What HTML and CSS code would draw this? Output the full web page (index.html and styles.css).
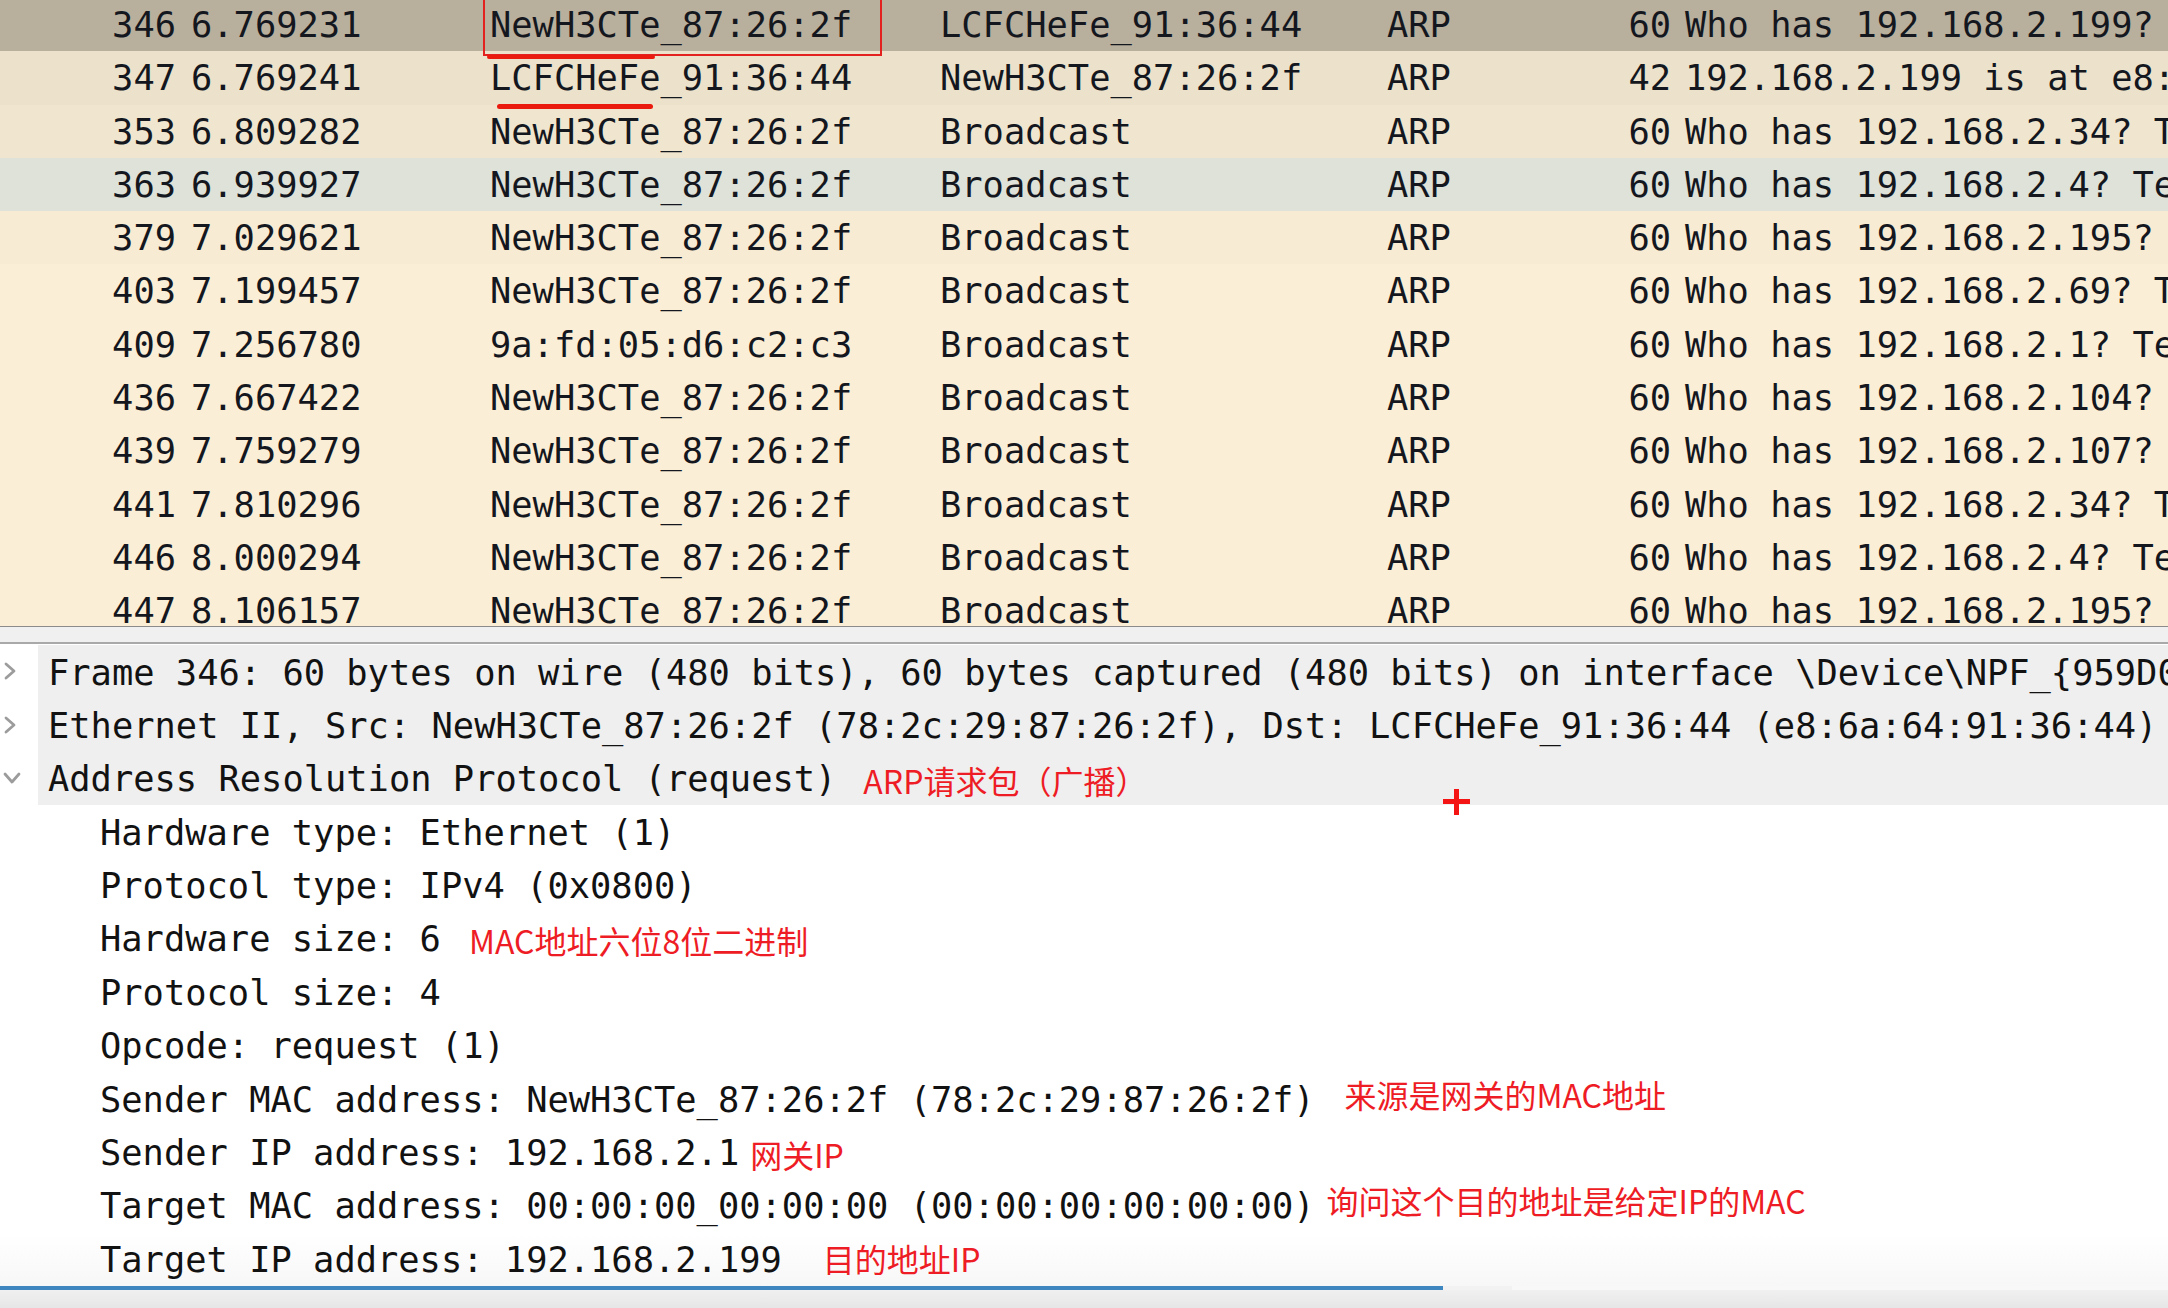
FILE: index.html
```html
<!DOCTYPE html>
<html lang="zh-CN">
<head>
<meta charset="utf-8">
<title>Wireshark ARP</title>
<link rel="stylesheet" href="styles.css">
</head>
<body>
<div class="packet-list">
  <div class="pkt pkt--sel"><span class="c-no">346</span><span class="c-time">6.769231</span><span>NewH3CTe_87:26:2f</span><span>LCFCHeFe_91:36:44</span><span>ARP</span><span class="c-len">60</span><span class="c-info">Who has 192.168.2.199? Tell 192.168.2.1</span></div>
  <div class="pkt pkt--shade1"><span class="c-no">347</span><span class="c-time">6.769241</span><span>LCFCHeFe_91:36:44</span><span>NewH3CTe_87:26:2f</span><span>ARP</span><span class="c-len">42</span><span class="c-info">192.168.2.199 is at e8:6a:64:91:36:44</span></div>
  <div class="pkt pkt--shade2"><span class="c-no">353</span><span class="c-time">6.809282</span><span>NewH3CTe_87:26:2f</span><span>Broadcast</span><span>ARP</span><span class="c-len">60</span><span class="c-info">Who has 192.168.2.34? Tell 192.168.2.1</span></div>
  <div class="pkt pkt--alt"><span class="c-no">363</span><span class="c-time">6.939927</span><span>NewH3CTe_87:26:2f</span><span>Broadcast</span><span>ARP</span><span class="c-len">60</span><span class="c-info">Who has 192.168.2.4? Tell 192.168.2.1</span></div>
  <div class="pkt pkt--shade3"><span class="c-no">379</span><span class="c-time">7.029621</span><span>NewH3CTe_87:26:2f</span><span>Broadcast</span><span>ARP</span><span class="c-len">60</span><span class="c-info">Who has 192.168.2.195? Tell 192.168.2.1</span></div>
  <div class="pkt"><span class="c-no">403</span><span class="c-time">7.199457</span><span>NewH3CTe_87:26:2f</span><span>Broadcast</span><span>ARP</span><span class="c-len">60</span><span class="c-info">Who has 192.168.2.69? Tell 192.168.2.1</span></div>
  <div class="pkt"><span class="c-no">409</span><span class="c-time">7.256780</span><span>9a:fd:05:d6:c2:c3</span><span>Broadcast</span><span>ARP</span><span class="c-len">60</span><span class="c-info">Who has 192.168.2.1? Tell 192.168.2.105</span></div>
  <div class="pkt"><span class="c-no">436</span><span class="c-time">7.667422</span><span>NewH3CTe_87:26:2f</span><span>Broadcast</span><span>ARP</span><span class="c-len">60</span><span class="c-info">Who has 192.168.2.104? Tell 192.168.2.1</span></div>
  <div class="pkt"><span class="c-no">439</span><span class="c-time">7.759279</span><span>NewH3CTe_87:26:2f</span><span>Broadcast</span><span>ARP</span><span class="c-len">60</span><span class="c-info">Who has 192.168.2.107? Tell 192.168.2.1</span></div>
  <div class="pkt"><span class="c-no">441</span><span class="c-time">7.810296</span><span>NewH3CTe_87:26:2f</span><span>Broadcast</span><span>ARP</span><span class="c-len">60</span><span class="c-info">Who has 192.168.2.34? Tell 192.168.2.1</span></div>
  <div class="pkt"><span class="c-no">446</span><span class="c-time">8.000294</span><span>NewH3CTe_87:26:2f</span><span>Broadcast</span><span>ARP</span><span class="c-len">60</span><span class="c-info">Who has 192.168.2.4? Tell 192.168.2.1</span></div>
  <div class="pkt"><span class="c-no">447</span><span class="c-time">8.106157</span><span>NewH3CTe_87:26:2f</span><span>Broadcast</span><span>ARP</span><span class="c-len">60</span><span class="c-info">Who has 192.168.2.195? Tell 192.168.2.1</span></div>
</div>

<div class="splitter"></div>

<div class="details">
  <div class="node node--hl">
    <span class="twisty"><svg class="chev-r" viewBox="0 0 14 20"><polyline points="3,3 11,10 3,17"/></svg></span>
    <span class="label">Frame 346: 60 bytes on wire (480 bits), 60 bytes captured (480 bits) on interface \Device\NPF_{959D0C2A-7B1E-4F3A-9D61-2E8C5B7A1F04}, id 0</span>
  </div>
  <div class="node node--hl">
    <span class="twisty"><svg class="chev-r" viewBox="0 0 14 20"><polyline points="3,3 11,10 3,17"/></svg></span>
    <span class="label">Ethernet II, Src: NewH3CTe_87:26:2f (78:2c:29:87:26:2f), Dst: LCFCHeFe_91:36:44 (e8:6a:64:91:36:44)</span>
  </div>
  <div class="node node--hl">
    <span class="twisty"><svg class="chev-d" viewBox="0 0 18 12"><polyline points="2,2 9,10 16,2"/></svg></span>
    <span class="label">Address Resolution Protocol (request)<span class="note note--arp">ARP请求包（广播）</span></span>
  </div>
  <div class="node node--child"><span class="twisty"></span><span class="label">Hardware type: Ethernet (1)</span></div>
  <div class="node node--child"><span class="twisty"></span><span class="label">Protocol type: IPv4 (0x0800)</span></div>
  <div class="node node--child"><span class="twisty"></span><span class="label">Hardware size: 6<span class="note note--hwsize">MAC地址六位8位二进制</span></span></div>
  <div class="node node--child"><span class="twisty"></span><span class="label">Protocol size: 4</span></div>
  <div class="node node--child"><span class="twisty"></span><span class="label">Opcode: request (1)</span></div>
  <div class="node node--child"><span class="twisty"></span><span class="label">Sender MAC address: NewH3CTe_87:26:2f (78:2c:29:87:26:2f)<span class="note note--smac">来源是网关的MAC地址</span></span></div>
  <div class="node node--child"><span class="twisty"></span><span class="label">Sender IP address: 192.168.2.1<span class="note note--sip">网关IP</span></span></div>
  <div class="node node--child"><span class="twisty"></span><span class="label">Target MAC address: 00:00:00_00:00:00 (00:00:00:00:00:00)<span class="note note--tmac">询问这个目的地址是给定IP的MAC</span></span></div>
  <div class="node node--child"><span class="twisty"></span><span class="label">Target IP address: 192.168.2.199<span class="note note--tip">目的地址IP</span></span></div>
</div>

<div class="progress"></div>
<div class="bottom-bar"></div>

<div class="mark-box"></div>
<div class="mark-line mark-line--1"></div>
<div class="mark-line mark-line--2"></div>
<div class="cross"></div>
</body>
</html>
```

FILE: styles.css
```css
* { box-sizing: border-box; }

html, body {
  margin: 0;
  padding: 0;
}

body {
  position: relative;
  width: 2168px;
  height: 1308px;
  overflow: hidden;
  background: #ffffff;
  font-family: "DejaVu Sans Mono", "Liberation Mono", monospace;
  font-size: 35.4px;
  color: #14171e;
}

/* ---------- packet list ---------- */
.packet-list {
  margin-top: -2px;
  height: 628px;
  overflow: hidden;
}

.pkt {
  display: grid;
  grid-template-columns: 176px 314px 450px 447px 241px 43px 1fr;
  height: 53.3px;
  line-height: 48px;
  padding-top: 3px;
  padding-bottom: 2.3px;
  white-space: nowrap;
  background: #fbeed6;
}

.pkt--sel { background: #b9af9d; }
.pkt--shade1 { background: #ece2cb; }
.pkt--shade2 { background: #f0e6cf; }
.pkt--alt { background: #dfe2d8; }
.pkt--shade3 { background: #f8ebd3; }

.c-no, .c-len { text-align: right; }
.c-time { padding-left: 15px; }
.c-info { padding-left: 14px; }

/* ---------- splitter ---------- */
.splitter {
  height: 18px;
  background: #f0f0f0;
  border-top: 1px solid #8b8b8b;
  border-bottom: 2px solid #a9a9a9;
}

/* ---------- details tree ---------- */
.details {
  height: 642px;
  padding-top: 1px;
  overflow: hidden;
  background: linear-gradient(to bottom, #ffffff 0, #ffffff 590px, #f7f7f7 642px);
  color: #121212;
}

.node {
  display: flex;
  height: 53.4px;
  white-space: nowrap;
}

.twisty {
  flex: none;
  width: 38px;
  display: flex;
  align-items: center;
  padding-left: 3px;
  padding-top: 1px;
  padding-bottom: 2px;
}

.chev-r { width: 14px; height: 20px; }
.chev-d { width: 18px; height: 12px; }

.twisty polyline {
  fill: none;
  stroke: #9c9c9c;
  stroke-width: 2.8;
  stroke-linecap: round;
  stroke-linejoin: round;
}

.label {
  flex: 1;
  line-height: 50px;
  padding-top: 2.5px;
  padding-bottom: 0.9px;
  padding-left: 10px;
}

.node--hl .label { background: #efefef; }
.node--child .label { padding-left: 62px; }

/* ---------- red annotations ---------- */
.note {
  font-family: "Noto Sans CJK SC", "Microsoft YaHei", sans-serif;
  font-size: 32px;
  line-height: 32px;
  color: #ee1c24;
}

.note--arp { margin-left: 27px; vertical-align: -3px; }
.note--hwsize { margin-left: 28px; vertical-align: -3px; }
.note--smac { margin-left: 30px; vertical-align: 4px; }
.note--sip { margin-left: 11px; vertical-align: -3px; }
.note--tmac { margin-left: 12px; vertical-align: 4px; }
.note--tip { margin-left: 41px; }

/* ---------- video progress bar ---------- */
.progress {
  height: 4px;
  background-color: #f8f8f8;
  background-image: linear-gradient(to right, #3d86bf 0, #3d86bf 1443px, #f2f2f2 1443px, #f2f2f2 1512px, transparent 1512px);
}

.bottom-bar {
  height: 18px;
  background: linear-gradient(to bottom, #f0f0f0, #e6e6e6);
}

/* ---------- overlay markings ---------- */
.mark-box {
  position: absolute;
  left: 483px;
  top: -4px;
  width: 399px;
  height: 60px;
  border: 2px solid #e3211f;
}

.mark-line {
  position: absolute;
  height: 4px;
  border-radius: 3px;
  background: #ea1a0e;
}

.mark-line--1 { left: 487px; top: 55px; width: 168px; }
.mark-line--2 { left: 497px; top: 104px; width: 156px; height: 5px; }

.cross {
  position: absolute;
  left: 1443px;
  top: 789px;
  width: 27px;
  height: 26px;
}

.cross::before,
.cross::after {
  content: "";
  position: absolute;
  background: #f41414;
}

.cross::before { left: 0; top: 10px; width: 27px; height: 5px; }
.cross::after { left: 11px; top: 0; width: 5px; height: 26px; }
```
